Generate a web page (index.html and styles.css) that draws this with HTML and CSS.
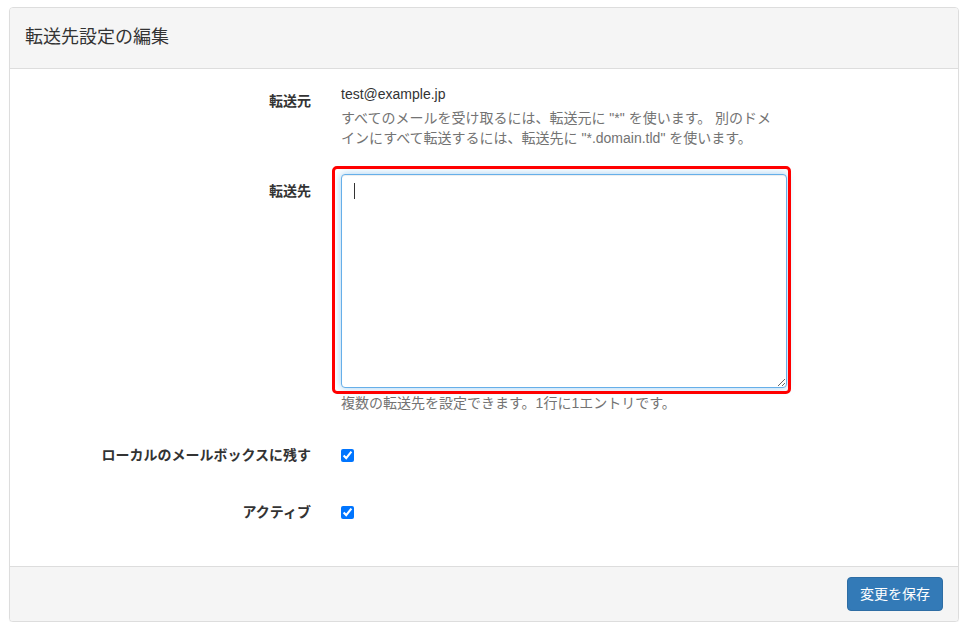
FILE: index.html
```html
<!DOCTYPE html>
<html lang="ja">
<head>
    <meta charset="UTF-8">
    <meta name="viewport" content="width=device-width, initial-scale=1.0">
    <title>転送先設定の編集</title>
    <link rel="stylesheet" href="styles.css">
</head>
<body>
    <div class="panel">
        <div class="panel-heading">
            <h3 class="panel-title">転送先設定の編集</h3>
        </div>

        <div class="panel-body">
            <!-- Source -->
            <div class="form-group group-source">
                <label class="control-label">転送元</label>
                <div class="field">
                    <p class="static">test@example.jp</p>
                    <p class="help-block">すべてのメールを受け取るには、転送元に "*" を使います。 別のドメインにすべて転送するには、転送先に "*.domain.tld" を使います。</p>
                </div>
            </div>

            <!-- Destination -->
            <div class="form-group group-dest">
                <label class="control-label">転送先</label>
                <div class="field">
                    <div class="textarea-wrap">
                        <textarea class="form-control is-focused"></textarea>
                        <span class="caret-mark"></span>
                        <span class="highlight"></span>
                    </div>
                    <p class="help-block">複数の転送先を設定できます。1行に1エントリです。</p>
                </div>
            </div>

            <div class="form-group group-check">
                <label class="control-label">ローカルのメールボックスに残す</label>
                <div class="field">
                    <input type="checkbox" class="check" checked>
                </div>
            </div>

            <div class="form-group group-check last">
                <label class="control-label">アクティブ</label>
                <div class="field">
                    <input type="checkbox" class="check" checked>
                </div>
            </div>
        </div>

        <div class="panel-footer">
            <button class="btn-primary">変更を保存</button>
        </div>
    </div>
</body>
</html>
```

FILE: styles.css
```css
body {
    margin: 0;
    padding: 7px 14px 0 9px;
    font-family: "Liberation Sans", "Noto Sans CJK JP", sans-serif;
    font-size: 14px;
    line-height: 20px;
    color: #333;
    background: #fff;
}
.panel {
    border: 1px solid #ddd;
    border-radius: 4px;
    background: #fff;
    box-shadow: 0 1px 1px rgba(0, 0, 0, 0.05);
}
.panel-heading {
    background-color: #f5f5f5;
    border-bottom: 1px solid #ddd;
    border-radius: 3px 3px 0 0;
    padding: 16px 15px 18px;
}
.panel-title {
    margin: 0;
    font-size: 18px;
    font-weight: normal;
    line-height: 26px;
    color: #333;
}
.panel-body {
    padding: 15px 0 37px;
}
.form-group {
    display: flex;
}
.control-label {
    width: 301px;
    flex: none;
    padding: 7px 15px 0 0;
    text-align: right;
    font-weight: bold;
}
.field {
    width: 444px;
    margin-left: 15px;
}
.static {
    margin: 0;
}
.help-block {
    margin: 4px 0 0;
    color: #737373;
}
.group-source {
    margin-bottom: 26px;
}
.group-dest {
    margin-bottom: 25px;
}
.group-dest .help-block {
    margin-top: 5px;
}
.group-check {
    height: 34px;
    margin-bottom: 23px;
}
.group-check.last {
    margin-bottom: 0;
}
.textarea-wrap {
    position: relative;
}
.form-control {
    display: block;
    box-sizing: border-box;
    width: 446px;
    height: 214px;
    margin: 0;
    padding: 6px 12px;
    font-family: inherit;
    font-size: 14px;
    line-height: 20px;
    color: #555;
    background: #fff;
    border: 1px solid #ccc;
    border-radius: 4px;
    box-shadow: inset 0 1px 1px rgba(0, 0, 0, 0.075);
    resize: vertical;
    outline: none;
}
.form-control.is-focused {
    border-color: #66afe9;
    box-shadow: inset 0 1px 1px rgba(0, 0, 0, 0.075), 0 0 8px rgba(102, 175, 233, 0.6);
}
.caret-mark {
    position: absolute;
    left: 13px;
    top: 9px;
    width: 1px;
    height: 16px;
    background: #333;
}
.highlight {
    position: absolute;
    left: -9px;
    top: -8px;
    right: -6px;
    bottom: -6px;
    border: 3px solid #f00;
    border-radius: 5px;
    pointer-events: none;
}
.check {
    display: block;
    width: 13px;
    height: 13px;
    margin: 11px 0 0;
}
.panel-footer {
    background-color: #f5f5f5;
    border-top: 1px solid #ddd;
    border-radius: 0 0 3px 3px;
    padding: 10px 15px;
    display: flex;
    justify-content: flex-end;
}
.btn-primary {
    font-family: inherit;
    font-size: 14px;
    line-height: 20px;
    padding: 6px 12px;
    color: #fff;
    background-color: #337ab7;
    border: 1px solid #2e6da4;
    border-radius: 4px;
    cursor: pointer;
}
```
